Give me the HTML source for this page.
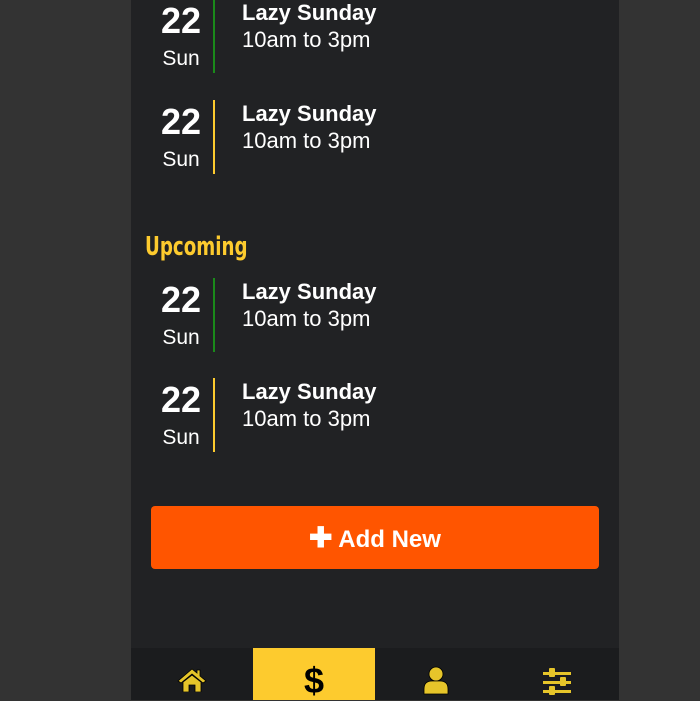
<!DOCTYPE html><html><head><style>
body{margin:0;width:700px;height:700px;background:#333333;font-family:"Liberation Sans",sans-serif;overflow:hidden;position:relative}
.main{position:absolute;left:131px;top:0;width:488px;height:700px;background:#212224}
.e{position:absolute;left:0;width:488px;height:74px;color:#fff}
.d{position:absolute;left:20px;width:60px;text-align:center;top:2px;font-size:36px;font-weight:bold;line-height:40px}
.s{position:absolute;left:20px;width:60px;text-align:center;top:47px;font-size:21px;line-height:26px}
.l{position:absolute;left:82px;top:0;width:2px;height:74px}
.t{position:absolute;left:111px;top:1px;font-size:22px;font-weight:bold;line-height:26px}
.h{position:absolute;left:111px;top:28px;font-size:22px;line-height:26px}
.up{position:absolute;left:14px;top:231px;color:#fdcb2e;font-family:"Liberation Sans Narrow","DejaVu Sans Condensed",sans-serif;font-weight:bold;font-size:26px;line-height:32px;transform:scaleX(.78);transform-origin:left}
.btn{position:absolute;left:20px;top:506px;width:448px;height:63px;background:#ff5500;border-radius:4px;color:#fff;font-weight:bold;font-size:24px;line-height:63px;text-align:center}
.nav{position:absolute;left:0;top:648px;width:488px;height:52px;background:#1b1c1e}
.act{position:absolute;left:122px;top:0;width:122px;height:52px;background:#fdcb2e}
</style></head><body><div class="main">
<div class="e" style="top:-1px"><div class="d">22</div><div class="s">Sun</div><div class="l" style="background:#1a8a1a"></div><div class="t">Lazy Sunday</div><div class="h">10am to 3pm</div></div>
<div class="e" style="top:100px"><div class="d">22</div><div class="s">Sun</div><div class="l" style="background:#fdcb2e"></div><div class="t">Lazy Sunday</div><div class="h">10am to 3pm</div></div>
<div class="up">Upcoming</div>
<div class="e" style="top:278px"><div class="d">22</div><div class="s">Sun</div><div class="l" style="background:#1a8a1a"></div><div class="t">Lazy Sunday</div><div class="h">10am to 3pm</div></div>
<div class="e" style="top:378px"><div class="d">22</div><div class="s">Sun</div><div class="l" style="background:#fdcb2e"></div><div class="t">Lazy Sunday</div><div class="h">10am to 3pm</div></div>
<div class="btn"><span style="font-size:28px">&#10010;</span> Add New</div>
<div class="nav"><div class="act"></div>
<svg style="position:absolute;left:46px;top:20px" width="30" height="24" viewBox="0 0 30 24"><path d="M15 1 L1 13 L4 15 L15 6 L26 15 L29 13 L23 8 V2 H20 V5 Z" fill="#e6c52a" stroke="#000" stroke-width=".8"/><path d="M6 14 L15 7 L24 14 V24 H18 V17 H12 V24 H6 Z" fill="#e6c52a" stroke="#000" stroke-width=".8"/></svg>
<div style="position:absolute;left:122px;width:122px;top:13px;text-align:center;font-size:36px;font-weight:bold;line-height:40px;color:#000">$</div>
<svg style="position:absolute;left:292px;top:18px" width="26" height="30" viewBox="0 0 26 30"><circle cx="13" cy="8" r="7" fill="#e6c52a" stroke="#000" stroke-width=".8"/><path d="M1 28 V23 Q1 15 9 15 H17 Q25 15 25 23 V28 Z" fill="#e6c52a" stroke="#000" stroke-width=".8"/></svg>
<svg style="position:absolute;left:412px;top:20px" width="28" height="28" viewBox="0 0 28 28"><g fill="#e6c52a"><rect x="0" y="4" width="28" height="3"/><rect x="0" y="13" width="28" height="3"/><rect x="0" y="22" width="28" height="3"/><rect x="6" y="0" width="6" height="9" rx="1"/><rect x="17" y="9" width="6" height="9" rx="1"/><rect x="6" y="18" width="6" height="9" rx="1"/></g></svg>
</div></div></body></html>
